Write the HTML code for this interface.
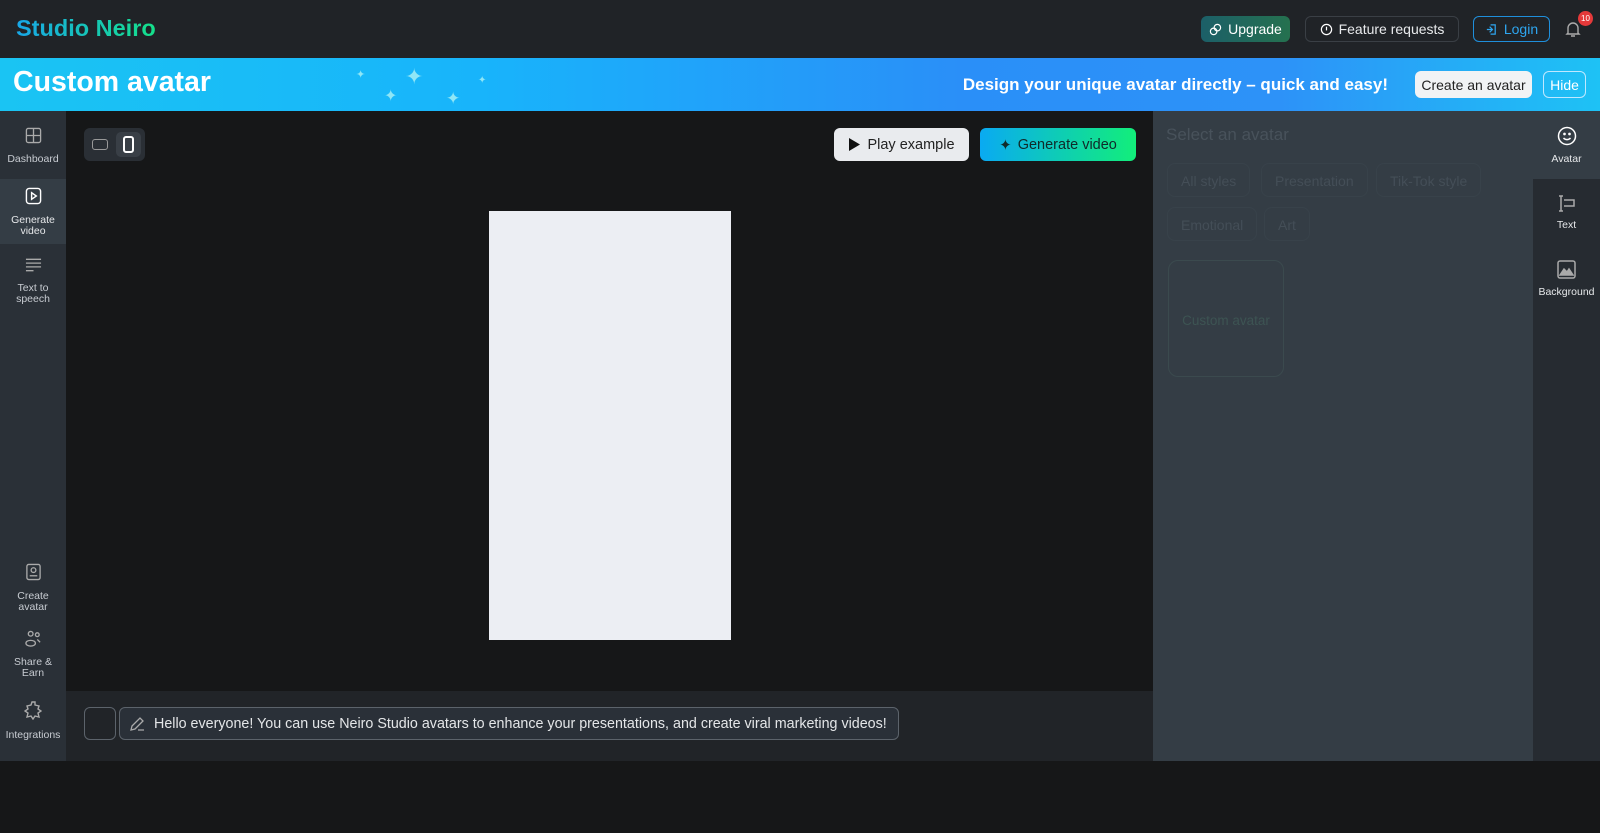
<!DOCTYPE html><html><head><style>
*{box-sizing:border-box;margin:0;padding:0}
body{width:1600px;height:833px;background:#161718;font-family:"Liberation Sans",sans-serif;position:relative;overflow:hidden}
.a{position:absolute}
.hdr{left:0;top:0;width:1600px;height:58px;background:#202327}
.logo{left:16px;top:15px;font-size:23.5px;font-weight:bold;background:linear-gradient(90deg,#18a7e8,#15e08a);-webkit-background-clip:text;color:transparent}
.btn{position:absolute;border-radius:6px;font-size:14px;display:flex;align-items:center;justify-content:center;gap:6px}
.ban{left:0;top:58px;width:1600px;height:53px;background:linear-gradient(90deg,#1ac4f3 0%,#18b4fb 30%,#2a8ff8 60%,#2d92f8 80%,#1ec2f5 100%)}
.side{left:0;top:111px;width:66px;height:650px;background:#2a3037}
.si{position:absolute;left:0;width:66px;text-align:center;color:#c8ccd2;font-size:10.5px;line-height:11px}
.si svg{display:block;margin:0 auto 10px}
.rp{left:1153px;top:111px;width:380px;height:650px;background:#343d45}
.rb{left:1533px;top:111px;width:67px;height:650px;background:#262b31}
.ri{position:absolute;left:1533px;width:67px;text-align:center;color:#e6e8ea;font-size:10.5px}
.ri svg{display:block;margin:0 auto 7px}
.chip{position:absolute;height:34px;border:1px solid #38424a;border-radius:8px;color:#444e57;font-size:14px;padding:9px 13px}
</style></head><body>
<div class="a hdr"></div>
<div class="a logo">Studio Neiro</div>
<div class="btn" style="left:1201px;top:16px;width:89px;height:26px;background:linear-gradient(90deg,#1c5f68,#25714f);color:#fff"><svg width="13" height="13" viewBox="0 0 14 14" fill="none" stroke="#fff" stroke-width="1.3"><circle cx="5" cy="9" r="3.5"/><circle cx="9" cy="5" r="3.5"/></svg>Upgrade</div>
<div class="btn" style="left:1305px;top:16px;width:154px;height:26px;border:1px solid #3a3f45;color:#e8eaec"><svg width="13" height="13" viewBox="0 0 14 14" fill="none" stroke="#fff" stroke-width="1.3"><circle cx="7" cy="7" r="5.5"/><path d="M7 4v4"/></svg>Feature requests</div>
<div class="btn" style="left:1473px;top:16px;width:77px;height:26px;border:1px solid #1f8fdc;color:#2ea6f0"><svg width="13" height="13" viewBox="0 0 14 14" fill="none" stroke="#2ea6f0" stroke-width="1.3"><path d="M6 2h5v10H6M2 7h6M5 4l3 3-3 3"/></svg>Login</div>
<svg class="a" style="left:1565px;top:20px" width="16" height="18" viewBox="0 0 16 18" fill="none" stroke="#aaa" stroke-width="1.4"><path d="M3 13V8a5 5 0 0110 0v5l1 1H2zM6 16h4"/></svg>
<div class="a" style="left:1578px;top:11px;width:15px;height:15px;border-radius:50%;background:#e5393a;color:#fff;font-size:8px;text-align:center;line-height:15px">10</div>
<div class="a ban"></div>
<div class="a" style="left:13px;top:66px;color:#fff;font-size:28.5px;font-weight:bold">Custom avatar</div>
<div class="a" style="left:356px;top:68px;color:#8fe6f6;font-size:11px">✦</div>
<div class="a" style="left:405px;top:64px;color:#8fe6f6;font-size:22px">✦</div>
<div class="a" style="left:384px;top:86px;color:#8fe6f6;font-size:16px">✦</div>
<div class="a" style="left:446px;top:89px;color:#8fe6f6;font-size:17px">✦</div>
<div class="a" style="left:478px;top:75px;color:#8fe6f6;font-size:10px">✦</div>
<div class="a" style="left:960px;top:75px;width:428px;text-align:right;color:#fff;font-size:17px;font-weight:bold">Design your unique avatar directly – quick and easy!</div>
<div class="btn" style="left:1415px;top:71px;width:117px;height:27px;background:#f1f3f5;color:#222">Create an avatar</div>
<div class="btn" style="left:1543px;top:71px;width:43px;height:27px;border:1px solid #bfe8ff;color:#fff">Hide</div>
<div class="a side"></div>
<div class="a" style="left:0;top:179px;width:66px;height:65px;background:#343d45"></div>
<div class="si" style="top:127px"><svg width="17" height="17" viewBox="0 0 18 18" fill="none" stroke="#aaa" stroke-width="1.4"><rect x="1.5" y="1.5" width="15" height="15" rx="2"/><path d="M9 1.5v15M1.5 9h15"/></svg>Dashboard</div>
<div class="si" style="top:187px;color:#e6e8ea"><svg width="17" height="18" viewBox="0 0 18 18" fill="none" stroke="#fff" stroke-width="1.5"><rect x="1.5" y="1" width="15" height="16" rx="3"/><path d="M7 5.5l5 3.5-5 3.5z"/></svg>Generate<br>video</div>
<div class="si" style="top:257px"><svg width="17" height="16" viewBox="0 0 18 16" fill="none" stroke="#aaa" stroke-width="1.4"><path d="M1 2h16M1 6h16M1 10h16M1 14h8"/></svg>Text to<br>speech</div>
<div class="si" style="top:563px"><svg width="17" height="18" viewBox="0 0 18 18" fill="none" stroke="#aaa" stroke-width="1.4"><rect x="2" y="1" width="14" height="16" rx="2"/><circle cx="9" cy="7" r="2.5"/><path d="M5 13h8"/></svg>Create<br>avatar</div>
<div class="si" style="top:630px"><svg width="17" height="17" viewBox="0 0 18 18" fill="none" stroke="#aaa" stroke-width="1.4"><circle cx="6" cy="4" r="2.5"/><circle cx="13" cy="5" r="2"/><path d="M1 14c0-4 10-4 10 0s-10 4-10 0zM13 10l3 3"/></svg>Share &amp;<br>Earn</div>
<div class="si" style="top:701px"><svg width="18" height="19" viewBox="0 0 18 19" fill="none" stroke="#aaa" stroke-width="1.4"><path d="M8 1h3v3l4 1-1 3 3 2-3 2 1 4-4-1-2 3-2-3-4 1 1-4-3-2 3-2-1-3 4-1z"/></svg>Integrations</div>
<div class="a" style="left:66px;top:691px;width:1087px;height:70px;background:#212428"></div>
<div class="a" style="left:84px;top:128px;width:61px;height:33px;background:#2a2f35;border-radius:6px"></div>
<div class="a" style="left:116px;top:132px;width:25px;height:25px;background:#393f46;border-radius:5px"></div>
<div class="a" style="left:92px;top:139px;width:16px;height:11px;border:1.5px solid #999;border-radius:3px"></div>
<div class="a" style="left:123px;top:136px;width:11px;height:17px;border:2px solid #fff;border-radius:3px"></div>
<div class="btn" style="left:834px;top:128px;width:135px;height:33px;background:#e9ebee;color:#222;font-size:14.5px"><svg width="13" height="15" viewBox="0 0 13 15"><path d="M1 1l11 6.5L1 14z" fill="#111"/></svg>Play example</div>
<div class="btn" style="left:980px;top:128px;width:156px;height:33px;background:linear-gradient(90deg,#0aaaf2,#12ee7a);color:#102a2a;font-size:14.5px"><span style="font-size:15px">✦</span>Generate video</div>
<div class="a" style="left:489px;top:211px;width:242px;height:429px;background:#eceef3"></div>
<div class="a" style="left:84px;top:707px;width:32px;height:33px;border:1.5px solid #5c636b;border-radius:6px"></div>
<div class="a" style="left:119px;top:707px;width:780px;height:33px;border:1.5px solid #5c636b;border-radius:6px;background:#2a3038;color:#e4e6e8;font-size:14.3px;padding:8px 0 0 34px">Hello everyone! You can use Neiro Studio avatars to enhance your presentations, and create viral marketing videos!</div>
<svg class="a" style="left:129px;top:715px" width="17" height="17" viewBox="0 0 17 17" fill="none" stroke="#aaa" stroke-width="1.3"><path d="M2 15l1-4 8-8 3 3-8 8zM9 15h6"/></svg>
<div class="a rp"></div>
<div class="a rb"></div>
<div class="a" style="left:1533px;top:111px;width:67px;height:68px;background:#343d45"></div>
<div class="a" style="left:1166px;top:125px;color:#48525b;font-size:17px">Select an avatar</div>
<div class="chip" style="left:1167px;top:163px">All styles</div>
<div class="chip" style="left:1261px;top:163px">Presentation</div>
<div class="chip" style="left:1376px;top:163px">Tik-Tok style</div>
<div class="chip" style="left:1167px;top:207px">Emotional</div>
<div class="chip" style="left:1264px;top:207px">Art</div>
<div class="a" style="left:1168px;top:260px;width:116px;height:117px;border:1px solid #3b4a4e;border-radius:10px;color:#3d5453;font-size:13.5px;padding-top:52px;text-align:center">Custom avatar</div>
<div class="ri" style="top:126px"><svg width="20" height="20" viewBox="0 0 20 20" fill="none" stroke="#fff" stroke-width="1.5"><circle cx="10" cy="10" r="8.5"/><circle cx="7.5" cy="8" r=".6" fill="#fff"/><circle cx="12.5" cy="8" r=".6" fill="#fff"/><path d="M6.5 12c2 2.2 5 2.2 7 0"/></svg>Avatar</div>
<div class="ri" style="top:195px"><svg width="20" height="17" viewBox="0 0 20 17" fill="none" stroke="#aaa" stroke-width="1.5"><path d="M4 1v15M2 1h4M2 16h4M7 5h10v6H7"/></svg>Text</div>
<div class="ri" style="top:260px"><svg width="19" height="19" viewBox="0 0 19 19" fill="none" stroke="#aaa" stroke-width="1.5"><rect x="1" y="1" width="17" height="17" rx="2"/><path d="M3 15l4-6 3 3 2-3 4 6z" fill="#aaa"/></svg>Background</div>
</body></html>
